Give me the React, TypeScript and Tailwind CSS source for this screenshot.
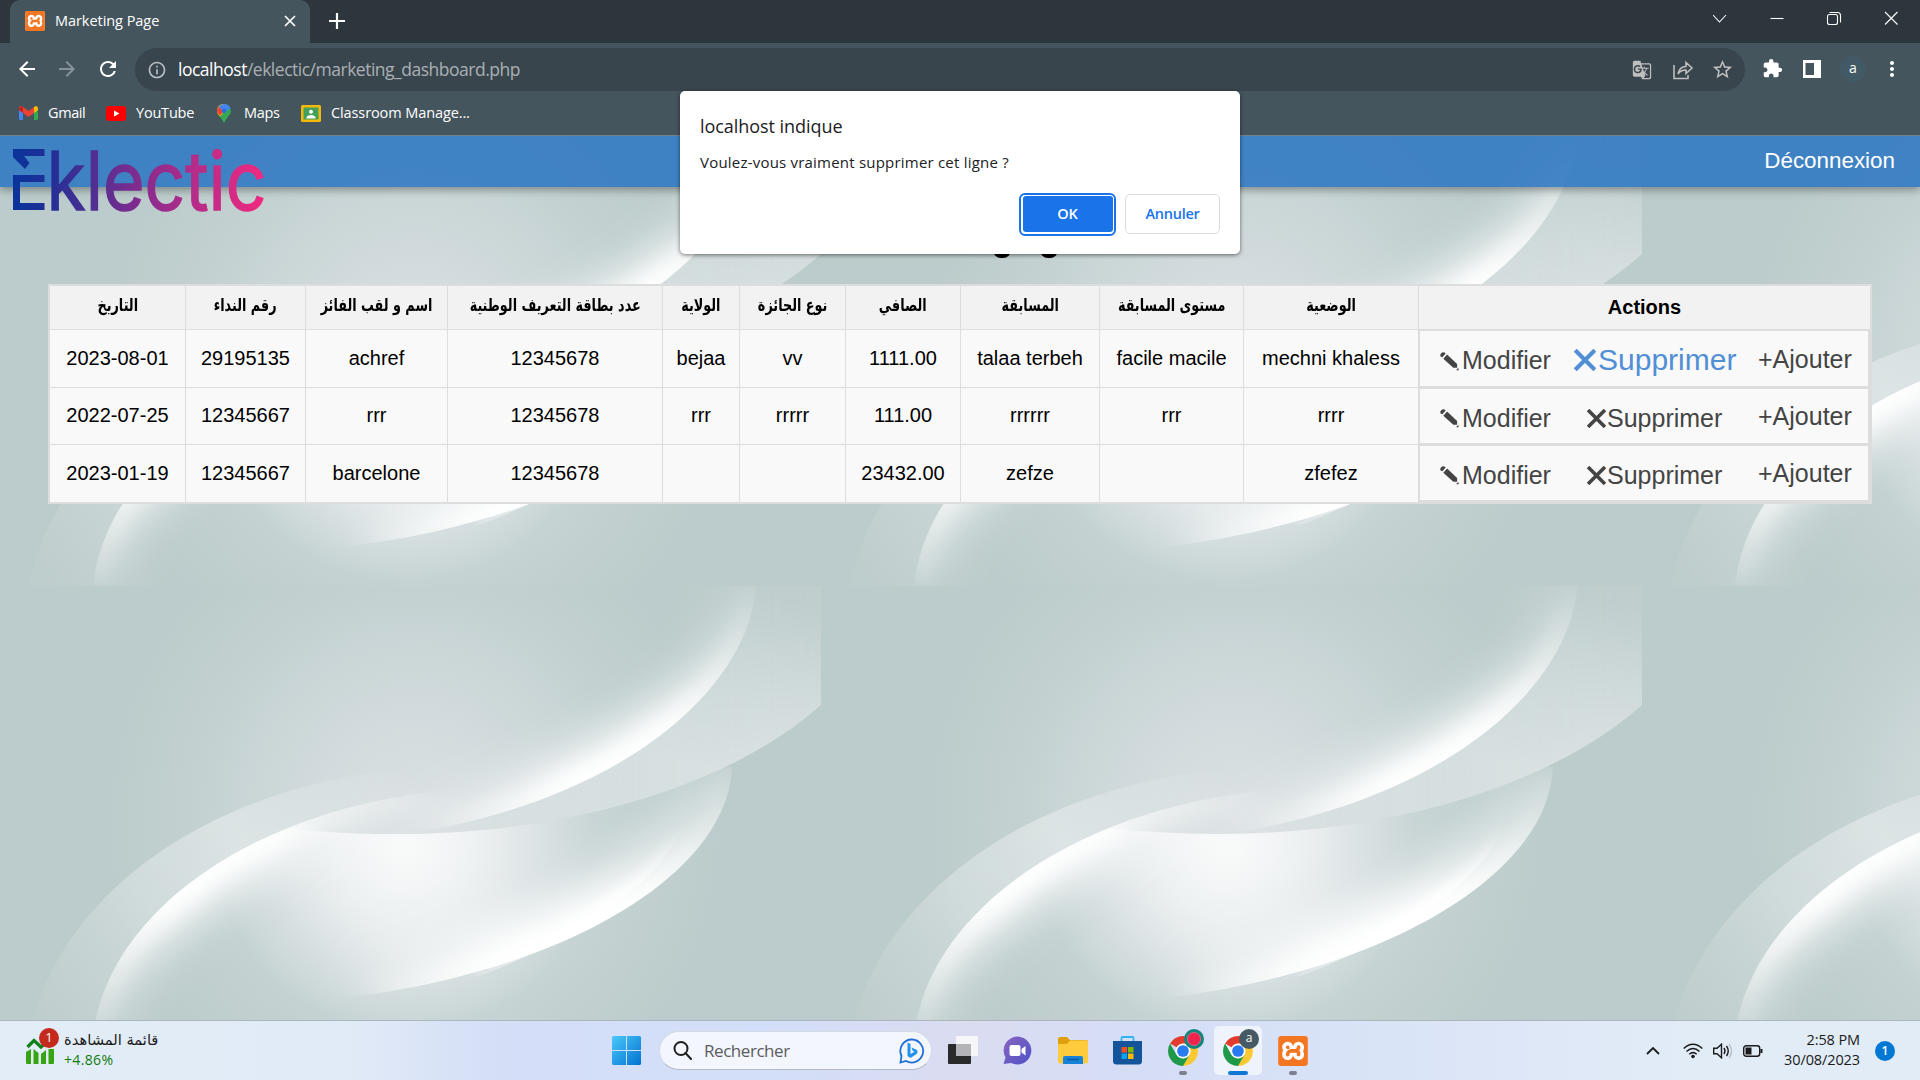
import React from "react";
import {
  MdArrowBack,
  MdArrowForward,
  MdRefresh,
  MdInfoOutline,
  MdStarOutline,
  MdExtension,
  MdMoreVert,
  MdGTranslate,
} from "react-icons/md";
import { SiXampp } from "react-icons/si";

const CURVE_A = "M757 -5C750 110 610 215 417 246";
const CURVE_B = "M821 119C730 200 570 248 395 248C300 248 205 235 126 207";
const CURVE_C = "M28 451C60 305 210 200 411 182";
const CURVE_D = "M93 451C105 330 250 222 450 204";
const CURVE_E = "M732 181C728 290 560 385 351 411";
const CURVE_F = "M684 240C655 305 560 360 477 391";
const BAND = "M757 -5C750 110 610 215 417 246L395 248C570 248 730 200 821 119L821 -5Z";

function Wallpaper() {
  return (
    <svg className="absolute inset-0 h-full w-full" aria-hidden="true">
      <defs>
        <radialGradient id="base" gradientUnits="userSpaceOnUse" cx="0" cy="0" r="1" gradientTransform="translate(415 235) scale(310 330)">
          <stop offset="0" stopColor="#dbe1e3" />
          <stop offset="0.4" stopColor="#cfd9db" />
          <stop offset="0.75" stopColor="#c2d0d0" />
          <stop offset="1" stopColor="#bccbcb" />
        </radialGradient>
        <radialGradient id="core" gradientUnits="userSpaceOnUse" cx="0" cy="0" r="1" gradientTransform="translate(405 262) scale(190 185)">
          <stop offset="0" stopColor="#fff" stopOpacity="0.85" />
          <stop offset="0.35" stopColor="#fff" stopOpacity="0.62" />
          <stop offset="0.7" stopColor="#fff" stopOpacity="0.25" />
          <stop offset="1" stopColor="#fff" stopOpacity="0" />
        </radialGradient>
        <linearGradient id="ga" gradientUnits="userSpaceOnUse" x1="757" y1="0" x2="417" y2="246">
          <stop offset="0" stopColor="#fff" stopOpacity="0.05" />
          <stop offset="0.4" stopColor="#fff" stopOpacity="0.95" />
          <stop offset="0.62" stopColor="#fff" stopOpacity="1" />
          <stop offset="1" stopColor="#fff" stopOpacity="0" />
        </linearGradient>
        <linearGradient id="gd" gradientUnits="userSpaceOnUse" x1="93" y1="451" x2="450" y2="204">
          <stop offset="0" stopColor="#fff" stopOpacity="0.1" />
          <stop offset="0.35" stopColor="#fff" stopOpacity="1" />
          <stop offset="0.6" stopColor="#fff" stopOpacity="0.9" />
          <stop offset="0.7" stopColor="#fff" stopOpacity="0.45" />
          <stop offset="1" stopColor="#fff" stopOpacity="0" />
        </linearGradient>
        <linearGradient id="ge" gradientUnits="userSpaceOnUse" x1="732" y1="181" x2="351" y2="411">
          <stop offset="0" stopColor="#fff" stopOpacity="0.1" />
          <stop offset="0.4" stopColor="#fff" stopOpacity="1" />
          <stop offset="0.65" stopColor="#fff" stopOpacity="1" />
          <stop offset="1" stopColor="#fff" stopOpacity="0" />
        </linearGradient>
        <linearGradient id="gf" gradientUnits="userSpaceOnUse" x1="684" y1="240" x2="477" y2="391">
          <stop offset="0" stopColor="#fff" stopOpacity="0" />
          <stop offset="0.5" stopColor="#fff" stopOpacity="1" />
          <stop offset="1" stopColor="#fff" stopOpacity="0.2" />
        </linearGradient>
        <linearGradient id="band" gradientUnits="userSpaceOnUse" x1="790" y1="10" x2="740" y2="190">
          <stop offset="0" stopColor="#fff" stopOpacity="0" />
          <stop offset="0.6" stopColor="#fff" stopOpacity="0.33" />
          <stop offset="1" stopColor="#fff" stopOpacity="0.5" />
        </linearGradient>
        <linearGradient id="bandFade" x1="0" x2="1">
          <stop offset="0" stopColor="#fff" stopOpacity="0.2" />
          <stop offset="0.5" stopColor="#fff" stopOpacity="0.6" />
          <stop offset="1" stopColor="#fff" />
        </linearGradient>
        <mask id="bandMask" maskUnits="userSpaceOnUse" x="390" y="-5" width="431" height="260">
          <rect x="390" y="-5" width="431" height="260" fill="url(#bandFade)" />
        </mask>
        <linearGradient id="outer" gradientUnits="userSpaceOnUse" x1="40" y1="440" x2="411" y2="182">
          <stop offset="0" stopColor="#fff" stopOpacity="0.03" />
          <stop offset="0.35" stopColor="#fff" stopOpacity="0.28" />
          <stop offset="0.6" stopColor="#fff" stopOpacity="0.36" />
          <stop offset="0.75" stopColor="#fff" stopOpacity="0.2" />
          <stop offset="1" stopColor="#fff" stopOpacity="0" />
        </linearGradient>
        <filter id="b22" x="-30%" y="-30%" width="160%" height="160%"><feGaussianBlur stdDeviation="22" /></filter>
        <filter id="b6" x="-30%" y="-30%" width="160%" height="160%"><feGaussianBlur stdDeviation="9" /></filter>
        <filter id="b3" x="-30%" y="-30%" width="160%" height="160%"><feGaussianBlur stdDeviation="5" /></filter>
        <clipPath id="ca"><path d={CURVE_A + "L0 246L0 -5Z"} /></clipPath>
        <clipPath id="cb"><path d={CURVE_B + "L0 207L0 451L821 451Z"} /></clipPath>
        <clipPath id="cd"><path d={CURVE_D + "L821 204L821 451Z"} /></clipPath>
        <clipPath id="ce"><path d={CURVE_E + "L0 411L0 181Z"} /></clipPath>
        <clipPath id="cf"><path d={CURVE_F + "L0 391L0 240Z"} /></clipPath>
        <clipPath id="tileClip"><rect width="821" height="451" /></clipPath>
        <g id="tile" clipPath="url(#tileClip)">
          <rect width="821" height="451" fill="url(#base)" />
          <path d={CURVE_C + "L450 204C250 222 105 330 93 451Z"} fill="url(#outer)" />
          <g clipPath="url(#cb)">
            <g clipPath="url(#cd)">
              <rect width="821" height="451" fill="url(#core)" />
            </g>
          </g>
          <g clipPath="url(#cd)">
            <path d={CURVE_D} fill="none" stroke="url(#gd)" strokeWidth="60" filter="url(#b22)" />
            <path d={CURVE_D} fill="none" stroke="url(#gd)" strokeWidth="28" filter="url(#b6)" />
          </g>
          <g clipPath="url(#ce)">
            <g clipPath="url(#cb)">
              <path d={CURVE_E} fill="none" stroke="url(#ge)" strokeWidth="84" filter="url(#b22)" />
              <path d={CURVE_E} fill="none" stroke="url(#ge)" strokeWidth="28" filter="url(#b6)" />
            </g>
          </g>
          <g clipPath="url(#cf)">
            <path d={CURVE_F} fill="none" stroke="url(#gf)" strokeWidth="18" filter="url(#b3)" />
          </g>
          <path d={BAND} fill="#c3d0d1" mask="url(#bandMask)" opacity="0.6" />
          <path d={BAND} fill="url(#band)" mask="url(#bandMask)" />
          <g clipPath="url(#ca)">
            <path d={CURVE_A} fill="none" stroke="url(#ga)" strokeWidth="60" filter="url(#b22)" />
            <path d={CURVE_A} fill="none" stroke="url(#ga)" strokeWidth="28" filter="url(#b6)" />
          </g>
        </g>
      </defs>
      <use href="#tile" />
      <use href="#tile" x="821" />
      <use href="#tile" x="1642" />
      <use href="#tile" y="451" />
      <use href="#tile" x="821" y="451" />
      <use href="#tile" x="1642" y="451" />
    </svg>
  );
}

function XamppIcon({ size }: { size: "sm" | "lg" }) {
  return (
    <span className={size === "sm" ? "block size-5 rounded-[3px] bg-white" : "block size-[30px] rounded-[5px] bg-white"}>
      <SiXampp className="size-full text-[#f37623]" />
    </span>
  );
}

function TitleBar() {
  return (
    <div className="flex h-[43px] bg-[#2c363c]">
      <div className="ml-2.5 flex h-full w-[300px] items-center rounded-t-[10px] bg-[#45555e] pb-px pl-[15px]">
        <XamppIcon size="sm" />
        <span className="ml-2.5 text-[14.5px] tracking-[-0.05px] text-white">Marketing Page</span>
        <svg className="mr-[14px] ml-auto size-3" viewBox="0 0 12 12" stroke="#fff" strokeWidth="1.7">
          <path d="M1 1L11 11M11 1L1 11" />
        </svg>
      </div>
      <svg className="mt-[13px] ml-[19px] size-4" viewBox="0 0 16 16" stroke="#fff" strokeWidth="2.2">
        <path d="M8 0V16M0 8H16" />
      </svg>
      <svg className="ml-auto h-[38px] w-[207px]" viewBox="0 0 207 38" fill="none" stroke="#fff" strokeWidth="1.1">
        <path d="M0 15L6.5 22L13 15" />
        <path d="M57.500 18.500H70.500" />
        <rect x="114.500" y="14.500" width="10" height="10" rx="2" />
        <path d="M116.500 12.500H124.500Q127.500 12.500 127.500 15.500V22.500" />
        <path d="M172 12L184.500 24.500M184.500 12L172 24.500" />
      </svg>
    </div>
  );
}

function AddressBar() {
  return (
    <div className="flex h-[48px] items-center bg-[#45555e] pt-[5px]">
      <MdArrowBack className="-mt-px ml-[15px] size-6 text-white" />
      <MdArrowForward className="-mt-px ml-4 size-6 text-[#87939a]" />
      <MdRefresh className="-mt-px ml-[17px] size-6 text-white" />
      <div className="ml-[15px] flex h-[43px] w-[1610px] items-center rounded-full bg-[#39454c] pr-3 pl-3">
        <MdInfoOutline className="size-5 text-[#b9bfc3]" />
        <span className="ml-[11px] text-[17.5px] tracking-[-0.49px] text-[#a9b0b5]">
          <span className="text-white">localhost</span>/eklectic/marketing_dashboard.php
        </span>
        <MdGTranslate className="ml-auto size-5 text-[#bfbfbf]" />
        <svg className="ml-[20px] size-[22px]" viewBox="0 0 22 22" fill="none" stroke="#bfbfbf" strokeWidth="1.6">
          <path d="M2 6V19.500H16V16" />
          <path d="M6 15C7 10 9 7.500 14 7.500V3.500L20 9L14 14.500V11C10 11 8 12 6 15Z" />
        </svg>
        <MdStarOutline className="mr-[-1px] ml-[17px] size-[23px] text-[#bfbfbf]" />
      </div>
      <MdExtension className="-mt-0.5 ml-[17px] size-[21px] text-white" />
      <svg className="-mt-0.5 ml-[20px] size-[18px]" viewBox="0 0 18 18">
        <path d="M0 0H18V18H0ZM2.500 3V15H11V3Z" fill="#fff" fillRule="evenodd" />
      </svg>
      <span className="-mt-0.5 ml-[19px] flex size-[26px] items-center justify-center rounded-full bg-[#425a66] pb-0.5 text-[14px] text-white">a</span>
      <MdMoreVert className="-mt-0.5 ml-[14px] size-6 text-white" />
    </div>
  );
}

function BookmarksBar() {
  return (
    <div className="flex h-[44px] items-center bg-[#45555e] pb-0 pl-[19px] text-[14.5px] text-white">
      <svg className="h-[14px] w-[19px]" viewBox="0 0 19 14">
        <path d="M0 3L4 6V14H1.500Q0 14 0 12.500Z" fill="#4285f4" />
        <path d="M19 3L15 6V14H17.500Q19 14 19 12.500Z" fill="#34a853" />
        <path d="M15 1L17 0Q19 0 19 2.500V4L15 7Z" fill="#fbbc04" />
        <path d="M0 4V2.500Q0 -1.500 4 1L9.500 5L15 1V7L9.500 11L4 7Z" fill="#ea4335" />
        <path d="M0 4V2.500Q.5 -.5 4 1V7Z" fill="#c5221f" />
      </svg>
      <span className="ml-2.5 w-[58px] tracking-[-0.4px]">Gmail</span>
      <svg className="h-[17px] w-5" viewBox="0 0 20 17">
        <rect y="1" width="20" height="15" rx="3" fill="#f00" />
        <path d="M8 5.500L13.500 8.500L8 11.500Z" fill="#fff" />
      </svg>
      <span className="ml-2.5 w-[81px] tracking-[-0.2px]">YouTube</span>
      <svg className="h-[19px] w-[14px]" viewBox="0 0 14 19">
        <path d="M7 0A7 7 0 0 0 0 7Q0 10 3 12.500L7 19L11 12.500Q14 10 14 7A7 7 0 0 0 7 0Z" fill="#34a853" />
        <path d="M0 7Q0 10 3 12.500L11 3L7 0Q0 0 0 7Z" fill="#fbbc04" />
        <path d="M0 7Q0 4 1.600 2.500L7 7L3 11.500Q0 9 0 7Z" fill="#ea4335" />
        <path d="M1.600 2.500Q4 0 7 0Q12 0 13.500 4.500L7 8Z" fill="#4285f4" />
        <circle cx="7" cy="6.800" r="2.400" fill="#2c6fdc" />
      </svg>
      <span className="ml-[13px] w-[57px] tracking-[-0.35px]">Maps</span>
      <svg className="h-[17px] w-5" viewBox="0 0 20 17">
        <rect width="20" height="17" rx="1.500" fill="#f4b90a" />
        <rect x="2.500" y="2.500" width="15" height="12" fill="#43a05a" />
        <circle cx="10" cy="6.800" r="2" fill="#fff" />
        <path d="M5.500 12.500Q6 10 10 10T14.500 12.500V13.500H5.500Z" fill="#fff" />
      </svg>
      <span className="ml-2.5 tracking-[-0.1px]">Classroom Manage...</span>
    </div>
  );
}

function EklecticLogo() {
  return (
    <svg className="absolute top-0 left-[8px] h-[92px] w-[262px] overflow-visible" viewBox="0 -10 262 92">
      <defs>
        <linearGradient id="logo" gradientUnits="userSpaceOnUse" x1="5" y1="0" x2="256" y2="0">
          <stop offset="0" stopColor="#0a349b" />
          <stop offset="0.12" stopColor="#1c2f97" />
          <stop offset="0.3" stopColor="#4a2f92" />
          <stop offset="0.55" stopColor="#8f2b8d" />
          <stop offset="0.75" stopColor="#bb2c88" />
          <stop offset="1" stopColor="#f0297f" />
        </linearGradient>
      </defs>
      <path d="M5 4H36.500V11H16L21.500 18L17 24L5 12Z" fill="url(#logo)" />
      <path d="M36.500 33.500H8.500V61.500H36.500" fill="none" stroke="url(#logo)" strokeWidth="7" />
      <text
        x="38.500"
        y="64.500"
        textLength="220"
        lengthAdjust="spacingAndGlyphs"
        fontFamily="Inter, sans-serif"
        fontSize="81"
        fill="url(#logo)"
        stroke="url(#logo)"
        strokeWidth="1.400"
      >
        klectic
      </text>
    </svg>
  );
}

const HEADERS = [
  "التاريخ",
  "رقم النداء",
  "اسم و لقب الفائز",
  "عدد بطاقة التعريف الوطنية",
  "الولاية",
  "نوع الجائزة",
  "الصافي",
  "المسابقة",
  "مستوى المسابقة",
  "الوضعية",
];

const ROWS = [
  ["2023-08-01", "29195135", "achref", "12345678", "bejaa", "vv", "1111.00", "talaa terbeh", "facile macile", "mechni khaless"],
  ["2022-07-25", "12345667", "rrr", "12345678", "rrr", "rrrrr", "111.00", "rrrrrr", "rrr", "rrrr"],
  ["2023-01-19", "12345667", "barcelone", "12345678", "", "", "23432.00", "zefze", "", "zfefez"],
];

function Cross({ className }: { className: string }) {
  return (
    <svg className={className} viewBox="0 0 18 18" stroke="currentColor" strokeWidth="3.4">
      <path d="M1 1L17 17M17 1L1 17" />
    </svg>
  );
}

function Actions({ hovered }: { hovered: boolean }) {
  return (
    <div className="-mt-px -ml-px flex items-center border-2 border-[#ddd] pl-5 text-[25px] leading-none text-[#444]">
      <span className="flex w-[117px] items-center pt-1">
        <svg className="mt-px mr-[3px] size-[19px] shrink-0" viewBox="0 0 20 20" fill="currentColor">
          <path d="M1 1.500Q3.500 -1 6 1.500L2.500 5.500L1 5Q-.5 3.500 1 1.500Z" />
          <path d="M7.500 2.500L18 12.500L18 16.500L14 16.500L3.500 7Z" />
          <path d="M17 19L19.500 16.500V19.500Z" />
        </svg>
        Modifier
      </span>
      {hovered ? (
        <span className="ml-[17px] flex w-[184px] items-center pt-[3px] text-[30px] text-[#508fd5]">
          <Cross className="mr-0.5 size-[22px] shrink-0" />
          Supprimer
        </span>
      ) : (
        <span className="ml-[30px] flex w-[171px] items-center pt-1">
          <Cross className="mr-px size-[19px] shrink-0" />
          Supprimer
        </span>
      )}
      <span className="pt-px">+Ajouter</span>
    </div>
  );
}

const GRID = "grid grid-cols-[136px_120px_142px_215px_77px_106px_115px_139px_144px_175px_451px]";

function WinnersTable() {
  return (
    <div className="relative mt-[97px] ml-12 w-[1824px] border-2 border-[#ddd] bg-[#f9f9f9] text-[20px] text-black">
      <div className={GRID + " h-[44px] bg-[#f2f2f2] font-bold"}>
        {HEADERS.map((h) => (
          <div key={h} dir="rtl" className="flex items-center justify-center border-r border-b border-[#ddd] pb-1 font-['DejaVu_Sans'] text-[17.5px] whitespace-nowrap">
            <span className="scale-x-[0.73]">{h}</span>
          </div>
        ))}
        <div className="flex items-center justify-center border-b border-[#ddd] pb-0.5">Actions</div>
      </div>
      {ROWS.map((r, i) => (
        <div key={r[0]} className={GRID + (i === 0 ? " h-[58px]" : " h-[57px]")}>
          {r.map((c, j) => (
            <div key={j} className={"flex items-center justify-center border-r border-[#ddd] pb-0.5 whitespace-nowrap " + (i < 2 ? "border-b" : "")}>
              {c}
            </div>
          ))}
          <Actions hovered={i === 0} />
        </div>
      ))}
    </div>
  );
}

function Page() {
  return (
    <main className="relative h-[885px] overflow-hidden bg-[#bccbcb] font-['Liberation_Sans',sans-serif]">
      <Wallpaper />
      <nav className="relative flex h-[52px] items-center justify-end border-t border-[#76808a] bg-[#2e78c3]/88 pr-[25px] pb-0.5 text-[22.4px] text-white shadow-[0_3px_8px_rgba(0,0,0,0.35)]">
        Déconnexion
      </nav>
      <EklecticLogo />
      <div className="absolute top-[100px] left-[993px] flex gap-[29px]">
        <span className="h-[23px] w-[18px] rounded-b-[8px] bg-black" />
        <span className="h-[23px] w-[18px] rounded-b-[8px] bg-black" />
      </div>
      <WinnersTable />
    </main>
  );
}

function ConfirmDialog() {
  return (
    <div className="absolute top-[91px] left-[680px] flex h-[163px] w-[560px] flex-col rounded-[5px] bg-white px-5 shadow-[0_1px_4px_rgba(0,0,0,0.55)]">
      <h2 className="mt-[22px] text-[18px] leading-[26px] tracking-[-0.05px] text-[#202124]">localhost indique</h2>
      <p className="mt-[12px] text-[15px] leading-[22px] tracking-[0.21px] text-[#202124]">Voulez-vous vraiment supprimer cet ligne ?</p>
      <div className="mt-[21px] flex items-center justify-end gap-[9px] text-[14.500px] font-semibold">
        <button className="-my-0.5 h-[43px] w-[97px] rounded-[6px] border-2 border-[#1a73e8] bg-white p-[1.500px]">
          <span className="flex size-full items-center justify-center rounded-[3px] bg-[#1a73e8] text-white">OK</span>
        </button>
        <button className="h-10 w-[95px] rounded-[5px] border border-[#dadce0] tracking-[-0.25px] text-[#1a73e8]">Annuler</button>
      </div>
    </div>
  );
}

function ChromeIcon() {
  return (
    <svg className="size-[30px]" viewBox="4 4 40 40">
      <path d="M24 24L6.700 14A20 20 0 0 1 41.300 14Z" fill="#e33b2e" />
      <path d="M24 14H41.300A20 20 0 0 1 24 44L24 24Z" fill="#fcc934" />
      <path d="M6.700 14L15.300 29L24 34L32.700 29L24 44A20 20 0 0 1 6.700 14Z" fill="#1e9948" />
      <circle cx="24" cy="24" r="10" fill="#fff" />
      <circle cx="24" cy="24" r="7.800" fill="#2a7bf0" />
    </svg>
  );
}

function TaskbarCenter() {
  return (
    <div className="flex items-center">
      <svg className="size-[29px]" viewBox="0 0 29 29">
        <defs>
          <linearGradient id="win" x1="0" y1="0" x2="1" y2="1">
            <stop offset="0" stopColor="#4cc9fb" />
            <stop offset="1" stopColor="#0072d0" />
          </linearGradient>
        </defs>
        <path d="M1 0H14V14H0V1ZM15 0H28L29 1V14H15ZM0 15H14V29H1L0 28ZM15 15H29V28L28 29H15Z" fill="url(#win)" />
      </svg>
      <div className="ml-[18px] flex h-[39px] w-[273px] items-center rounded-full border border-[#d3d9e6] border-b-[#b4bac8] bg-[#f3f6fd] pr-1.5 pl-[13px]">
        <svg className="size-[19px]" viewBox="0 0 19 19" fill="none" stroke="#1f1f1f" strokeWidth="2">
          <circle cx="8" cy="7.500" r="6.500" />
          <path d="M12.500 12L18 18" strokeLinecap="round" />
        </svg>
        <span className="ml-3 text-[17px] tracking-[-0.45px] text-[#5c5c5f]">Rechercher</span>
        <svg className="ml-auto size-[26px]" viewBox="0 0 26 26" fill="none">
          <path d="M13 1.500A11.500 11.500 0 1 1 7 23L1.500 24.500L2.500 18A11.500 11.500 0 0 1 13 1.500Z" stroke="#1d6fd6" strokeWidth="1.800" />
          <path d="M8.500 4.500L11.500 6V16L15.500 13.700L13.500 12.500L12.500 9.500L18 12Q19.500 14 17.500 16L11.500 20L8.500 18Z" fill="#2392e8" />
        </svg>
      </div>
      <svg className="ml-4 size-[30px]" viewBox="0 0 30 30">
        <rect x="0" y="8" width="23" height="20" rx="1" fill="#2a2a2a" />
        <rect x="8" y="0" width="22" height="20" rx="1" fill="#f6f6f8" />
        <rect x="8" y="8" width="15" height="12" fill="#b4b4b8" />
      </svg>
      <svg className="ml-[25px] size-[29px]" viewBox="0 0 29 29">
        <defs>
          <linearGradient id="chat" x1="0" y1="0" x2="1" y2="1">
            <stop offset="0" stopColor="#8864c0" />
            <stop offset="1" stopColor="#4f52c9" />
          </linearGradient>
        </defs>
        <path d="M14.500 0.500A14 14 0 1 1 8 27L0.500 28L2.500 21.500A14 14 0 0 1 14.500 0.500Z" fill="url(#chat)" />
        <rect x="6.500" y="9" width="11" height="11" rx="2" fill="#fff" />
        <path d="M18.500 13L22.500 10V19.500L18.500 16.500Z" fill="#fff" />
      </svg>
      <svg className="ml-[26px] h-[27px] w-[30px]" viewBox="0 0 30 27">
        <path d="M0 2Q0 0 2 0H9L12 3H28Q30 3 30 5V10H0Z" fill="#e0a00e" />
        <path d="M0 7H9L12 3.500H28Q30 3.500 30 5.500V24.500Q30 26.500 28 26.500H2Q0 26.500 0 24.500Z" fill="#fdcb3b" />
        <path d="M5 27V21Q5 19 7 19H23Q25 19 25 21V27Z" fill="#1683d8" />
        <path d="M9 22.500H21" stroke="#0b58a0" strokeWidth="1.500" />
      </svg>
      <svg className="ml-[25px] h-[29px] w-[29px]" viewBox="0 0 29 29">
        <path d="M8.500 6V2Q8.500 1 9.500 1H19.500Q20.500 1 20.500 2V6" fill="none" stroke="#30b5f2" strokeWidth="1.800" />
        <path d="M0 5H29V25Q29 28.500 25.500 28.500H3.500Q0 28.500 0 25Z" fill="#14549a" />
        <path d="M8.500 11H14V16.500H8.500Z" fill="#f25022" />
        <path d="M15 11H20.500V16.500H15Z" fill="#7fba00" />
        <path d="M8.500 17.500H14V23H8.500Z" fill="#00a4ef" />
        <path d="M15 17.500H20.500V23H15Z" fill="#ffb900" />
      </svg>
      <div className="relative ml-[17px] flex h-12 w-[48px] items-center justify-center">
        <ChromeIcon />
        <span className="absolute top-[2px] right-[3px] flex size-5 items-center justify-center rounded-full bg-[#12867c]">
          <span className="size-3.5 rounded-full border border-[#d66a80] bg-[#f0224e]" />
        </span>
        <span className="absolute bottom-0 left-5 h-1 w-2 rounded-full bg-[#7c8190]" />
      </div>
      <div className="relative ml-[7px] flex h-[49px] w-[48px] items-center justify-center rounded-[5px] bg-[#eff3fc]">
        <ChromeIcon />
        <span className="absolute top-[3px] right-[3px] flex size-5 items-center justify-center rounded-full bg-[#455a64] pb-0.5 text-[12px] text-white">a</span>
        <span className="absolute bottom-0 left-3.5 h-1 w-5 rounded-full bg-[#0f78d4]" />
      </div>
      <div className="relative ml-[7px] flex h-12 w-[48px] items-center justify-center">
        <XamppIcon size="lg" />
        <span className="absolute bottom-0 left-5 h-1 w-2 rounded-full bg-[#7c8190]" />
      </div>
    </div>
  );
}

function Taskbar() {
  return (
    <footer className="flex h-[60px] items-center border-t border-[#aab5bd] bg-[linear-gradient(90deg,#e3edf7_0%,#e1ebf7_18%,#d4def7_26%,#d3def8_40%,#dadcf1_50%,#d5def6_60%,#dbe5f7_75%,#e2ecf7_88%)]">
      <div className="relative ml-[26px] flex w-[586px] items-center">
        <svg className="h-[28px] w-7" viewBox="0 0 28 28">
          <path d="M0 15L5 12V27H1Q0 27 0 26ZM7.500 12L12.500 16V27H7.500ZM15 17L20 13V27H15ZM22.500 12H28V26Q28 27 27 27H22.500Z" fill="#35a514" />
          <path d="M1.500 10L8 3.500L15 10L22 4" fill="none" stroke="#12801a" strokeWidth="3.200" />
        </svg>
        <span className="absolute -top-1 left-[13px] flex size-5 items-center justify-center rounded-full bg-[#c42b1c] text-[13px] text-white">1</span>
        <div className="ml-2.5 flex flex-col text-[14px] leading-5">
          <span className="-mt-0.5 font-['DejaVu_Sans'] text-[14.700px] text-[#1b1b1b]" dir="rtl">قائمة المشاهدة</span>
          <span className="tracking-[0.35px] text-[#0f7b0f]">+4.86%</span>
        </div>
      </div>
      <TaskbarCenter />
      <div className="mr-[25px] ml-auto flex items-center">
        <svg className="h-2 w-3.5" viewBox="0 0 14 8" fill="none" stroke="#1b1b1b" strokeWidth="1.800">
          <path d="M1 7L7 1L13 7" />
        </svg>
        <svg className="ml-[23px] h-4 w-5" viewBox="0 0 20 16" fill="none" stroke="#1b1b1b" strokeWidth="1.500">
          <path d="M.7 5.500Q10 -3 19.300 5.500M3.500 8.500Q10 2.500 16.500 8.500M6.300 11.300Q10 8 13.700 11.300" />
          <circle cx="10" cy="13.500" r="1.800" fill="#1b1b1b" stroke="none" />
        </svg>
        <svg className="ml-2.5 h-4 w-5" viewBox="0 0 20 16" fill="none" stroke="#1b1b1b" strokeWidth="1.400">
          <path d="M.7 5.300H4L8.500 1.200V14.800L4 10.700H.7Z" />
          <path d="M11 5Q13 8 11 11M13.500 3Q17 8 13.500 13" />
          <path d="M16 1Q21 8 16 15" stroke="#b9c0c8" />
        </svg>
        <svg className="ml-2.5 h-3 w-5" viewBox="0 0 20 12" fill="none" stroke="#1b1b1b" strokeWidth="1.400">
          <rect x=".7" y=".7" width="16" height="10.600" rx="2.500" />
          <rect x="2.500" y="2.500" width="6" height="7" fill="#1b1b1b" stroke="none" />
          <path d="M18.500 4V8" strokeWidth="2" />
        </svg>
        <div className="ml-[18px] w-[79px] pb-0.5 text-right text-[14.500px] leading-5 tracking-[-0.1px] whitespace-nowrap text-[#1b1b1b]">
          <div>2:58 PM</div>
          <div>30/08/2023</div>
        </div>
        <span className="ml-[15px] flex size-5 items-center justify-center rounded-full bg-[#0078d4] text-[12px] font-semibold text-white">1</span>
      </div>
    </footer>
  );
}

export default function App() {
  return (
    <div className="relative flex h-[1080px] w-[1920px] flex-col overflow-hidden font-['Open_Sans',sans-serif]">
      <TitleBar />
      <AddressBar />
      <BookmarksBar />
      <Page />
      <Taskbar />
      <ConfirmDialog />
    </div>
  );
}
